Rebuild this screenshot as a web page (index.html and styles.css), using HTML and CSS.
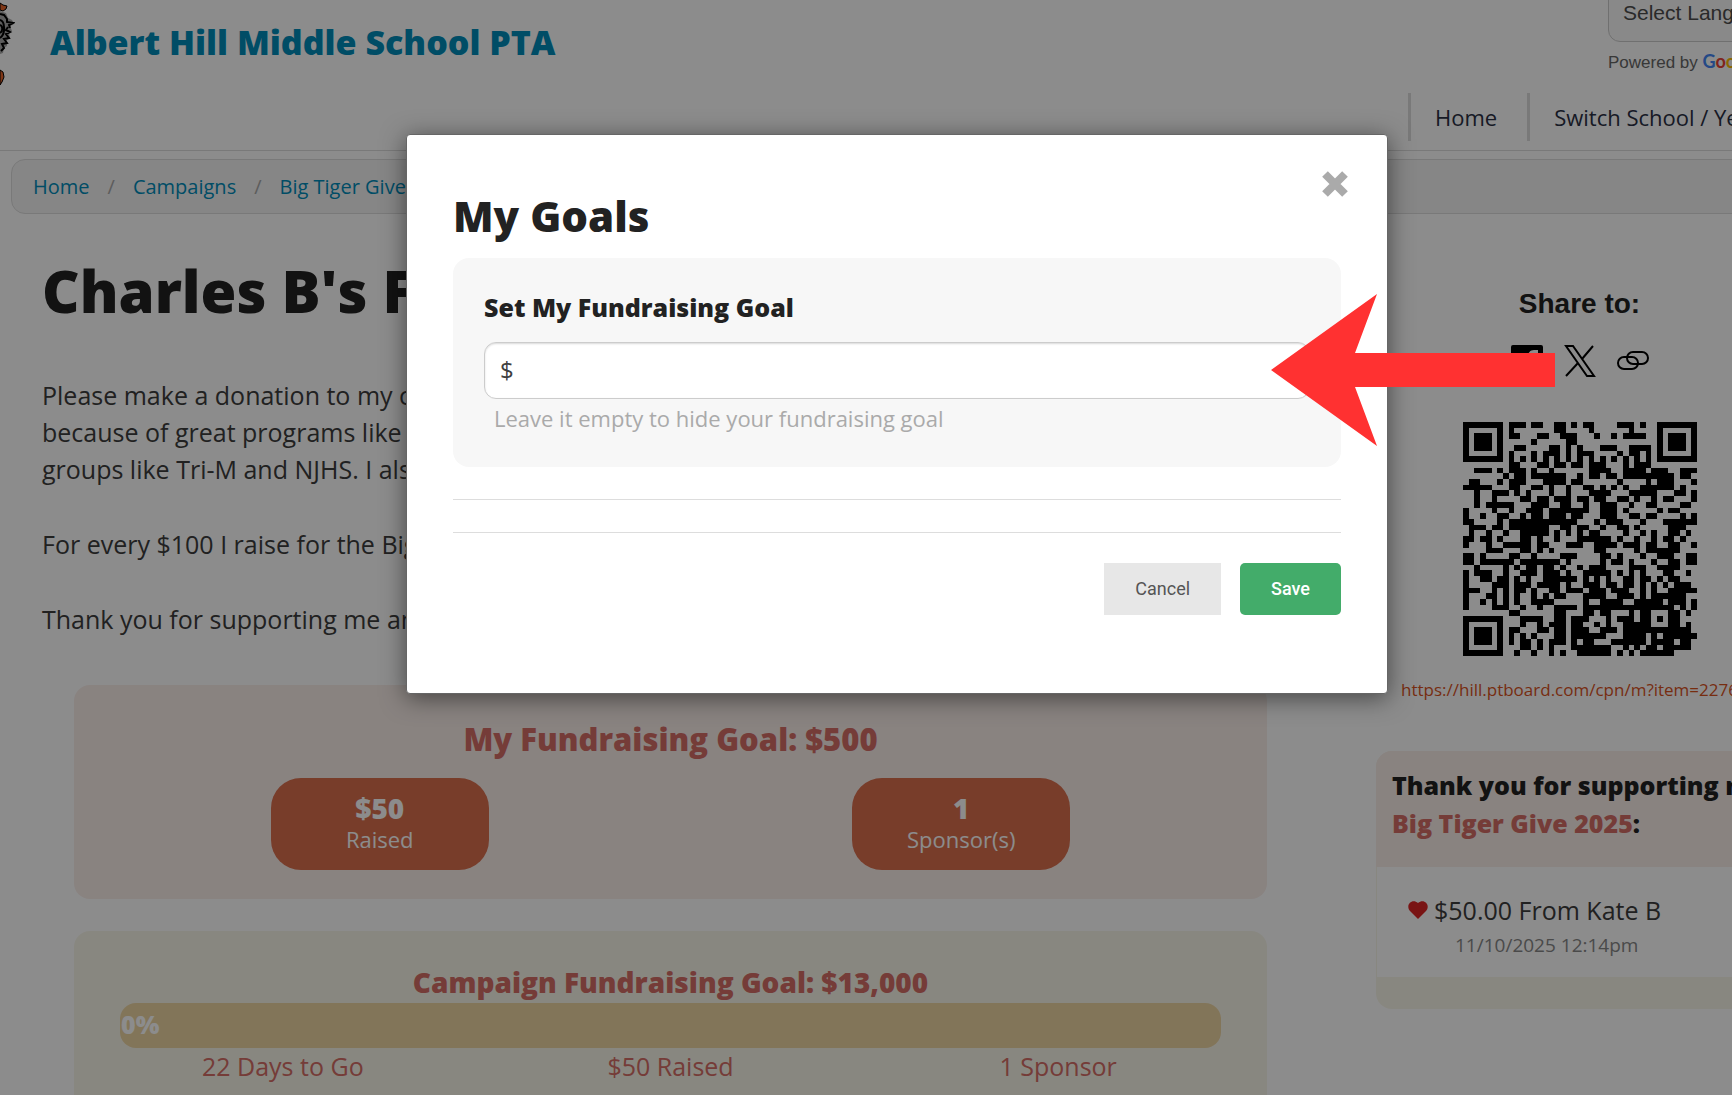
FILE: index.html
```
<!DOCTYPE html>
<html lang="en">
<head>
  <meta charset="UTF-8">
  <meta name="viewport" content="width=device-width, initial-scale=1.0">
  <title>Albert Hill Middle School PTA</title>
  <link rel="stylesheet" href="styles.css">
</head>
<body>
  <div class="page">
    <header class="header">
      <svg class="logo" viewBox="0 0 15 86" aria-hidden="true">
        <path d="M0 3 L3 5 7 6 6 9 3 11 0 10Z" fill="#e8652b" stroke="#000"/>
        <path d="M0 11 L6 13 8 18 12 20 14 24 10 26 12 31 9 33 10 38 7 40 7 46 4 48 3 53 0 54Z" fill="#aaa"/>
        <path d="M0 14l4 1 3 4 0 3 6 1-4 2 1 3M0 20c5 1 6 14 0 18M0 25c3 1 3 6 0 8M8 27l-2 3 4 2-4 2 3 4-5 1 3 4-5 1 2 4-3 3" fill="none" stroke="#000" stroke-width="2"/>
        <path d="M0 70 L3 72 4 77 2 82 0 85Z" fill="#e8652b" stroke="#000"/>
      </svg>
      <a class="brand" href="#">Albert Hill Middle School PTA</a>
      <div class="header-side">
        <div class="translate">
          <select class="language" aria-label="Select Language">
            <option>Select Language</option>
          </select>
          <div class="powered">Powered by
            <span class="google"><span class="g-blue">G</span><span class="g-red">o</span><span class="g-yellow">o</span><span class="g-blue">g</span><span class="g-green">l</span><span class="g-red">e</span></span>
          </div>
        </div>
        <nav class="nav">
          <a href="#">Home</a>
          <a href="#">Switch School / Year</a>
        </nav>
      </div>
    </header>

    <nav class="breadcrumbs" aria-label="Breadcrumbs">
      <a href="#">Home</a>
      <a href="#">Campaigns</a>
      <a href="#">Big Tiger Give</a>
    </nav>

    <div class="columns">
      <main class="main">
        <h1>Charles B's F</h1>
        <div class="story">
          <p>Please make a donation to my c<br>because of great programs like<br>groups like Tri-M and NJHS. I als</p>
          <p>For every $100 I raise for the Big</p>
          <p>Thank you for supporting me an</p>
        </div>

        <section class="card card-mine">
          <h2>My Fundraising Goal: $500</h2>
          <div class="pills">
            <div class="pill"><strong>$50</strong><span>Raised</span></div>
            <div class="pill"><strong>1</strong><span>Sponsor(s)</span></div>
          </div>
        </section>

        <section class="card card-campaign">
          <h2>Campaign Fundraising Goal: $13,000</h2>
          <div class="bar">0%</div>
          <div class="stats">
            <span>22 Days to Go</span>
            <span>$50 Raised</span>
            <span>1 Sponsor</span>
          </div>
        </section>
      </main>

      <aside class="side">
        <div class="share">
          <h3>Share to:</h3>
          <div class="share-icons">
            <a href="#" aria-label="Facebook">
              <svg width="32" height="32" viewBox="0 0 32 32"><path fill-rule="evenodd" d="M2 0h28a2 2 0 0 1 2 2v28a2 2 0 0 1-2 2h-8V20h4l1-5h-5v-3c0-2 1-3 3-3h2V5h-4c-4 0-6 3-6 6v4h-4v5h4v12H2a2 2 0 0 1-2-2V2a2 2 0 0 1 2-2z"/></svg>
            </a>
            <a href="#" aria-label="X">
              <svg width="32" height="32" viewBox="0 0 32 32" fill="none" stroke="#000" stroke-width="2"><path d="M2 1h7l21 30h-7zM29 1L18 14M14 18L2 31"/></svg>
            </a>
            <a href="#" aria-label="Copy link">
              <svg width="32" height="32" viewBox="0 0 32 32" fill="none" stroke="#000" stroke-width="2"><rect x="1" y="12" width="20" height="12" rx="6"/><rect x="10" y="7" width="21" height="12" rx="6"/></svg>
            </a>
          </div>
          <svg class="qr" viewBox="0 -0.5 41 41" shape-rendering="crispEdges" role="img" aria-label="QR code">
            <path d="M0 0h7m1 0h3m1 0h2m2 0h2m1 0h1m1 0h2m4 0h3m1 0h1m2 0h7
              M0 1h1m5 0h1m1 0h1m7 0h2m4 0h1m6 0h1m4 0h1m5 0h1
              M0 2h1m1 0h3m1 0h1m1 0h2m3 0h2m2 0h3m3 0h1m2 0h1m1 0h4m2 0h1m1 0h3m1 0h1
              M0 3h1m1 0h3m1 0h1m5 0h1m5 0h2m14 0h1m1 0h3m1 0h1
              M0 4h1m1 0h3m1 0h1m2 0h2m4 0h2m1 0h1m1 0h1m3 0h3m2 0h4m1 0h1m1 0h3m1 0h1
              M0 5h1m5 0h1m1 0h1m3 0h1m1 0h3m1 0h1m1 0h3m4 0h1m1 0h2m1 0h1m1 0h1m5 0h1
              M0 6h7m1 0h1m1 0h1m1 0h1m1 0h1m1 0h1m1 0h1m1 0h1m1 0h1m1 0h1m1 0h1m1 0h1m1 0h1m1 0h1m1 0h7
              M8 7h2m3 0h2m1 0h2m1 0h2m1 0h3m3 0h1m1 0h3
              M2 8h3m1 0h1m1 0h3m1 0h1m2 0h1m6 0h4m2 0h4m1 0h3m2 0h3
              M7 9h1m1 0h2m1 0h6m2 0h1m1 0h2m1 0h2m1 0h9m1 0h2
              M1 10h2m3 0h1m1 0h3m3 0h4m1 0h2m6 0h1m4 0h1m1 0h3m3 0h1
              M0 11h5m3 0h2m2 0h2m1 0h1m2 0h1m2 0h2m1 0h1m1 0h1m1 0h1m2 0h6m1 0h1m2 0h1
              M2 12h1m2 0h3m1 0h1m1 0h1m3 0h1m2 0h1m3 0h4m3 0h5m3 0h2m1 0h1
              M2 13h1m2 0h1m4 0h2m1 0h2m1 0h3m1 0h2m1 0h2m2 0h2m1 0h1m2 0h1m1 0h2m3 0h1
              M2 14h1m1 0h5m3 0h3m2 0h2m2 0h1m2 0h3m2 0h1m2 0h2m4 0h2
              M0 15h1m4 0h1m2 0h1m2 0h3m1 0h7m2 0h3m1 0h1m5 0h1m1 0h2
              M0 16h1m2 0h1m2 0h2m2 0h1m1 0h2m1 0h3m1 0h2m3 0h3m2 0h2m1 0h2m4 0h1m1 0h1
              M0 17h2m4 0h1m1 0h12m3 0h1m1 0h3m3 0h1m3 0h6
              M1 18h3m1 0h2m1 0h7m2 0h2m1 0h2m2 0h1m2 0h2m1 0h1m5 0h3
              M1 19h1m2 0h1m2 0h1m2 0h5m1 0h1m1 0h1m1 0h1m1 0h2m4 0h1m2 0h1m1 0h1m2 0h2m1 0h1
              M0 20h2m1 0h2m1 0h1m3 0h2m1 0h1m2 0h1m3 0h6m1 0h1m2 0h1m2 0h1m1 0h2m1 0h1
              M0 21h1m3 0h1m2 0h5m1 0h2m3 0h3m2 0h4m1 0h3m1 0h2m2 0h2m2 0h2
              M4 22h3m3 0h2m1 0h1m1 0h1m7 0h2m5 0h1m1 0h6
              M0 23h2m1 0h1m4 0h2m2 0h1m4 0h3m4 0h2m1 0h1m3 0h1m2 0h3m2 0h2
              M0 24h2m1 0h6m1 0h7m1 0h1m5 0h1m1 0h2m1 0h1m3 0h1m2 0h2m1 0h2
              M2 25h1m4 0h1m1 0h1m1 0h2m1 0h2m1 0h1m2 0h1m1 0h3m4 0h3m2 0h4
              M0 26h1m1 0h3m2 0h1m2 0h3m1 0h3m1 0h1m2 0h5m1 0h1m1 0h1m1 0h1m3 0h2m2 0h1
              M0 27h1m2 0h2m1 0h2m1 0h1m1 0h1m2 0h6m1 0h1m1 0h1m1 0h1m2 0h2m1 0h2m1 0h1m1 0h2
              M0 28h1m4 0h3m1 0h3m1 0h4m1 0h1m2 0h3m1 0h2m1 0h2m1 0h1m1 0h1m1 0h1m1 0h3
              M0 29h3m2 0h1m1 0h1m1 0h2m1 0h1m2 0h2m1 0h3m1 0h3m1 0h3m2 0h1m1 0h1m2 0h6
              M0 30h1m3 0h2m1 0h1m1 0h1m2 0h1m1 0h1m1 0h2m3 0h4m2 0h3m1 0h1m1 0h6
              M0 31h1m2 0h1m1 0h1m1 0h1m1 0h1m2 0h4m5 0h1m2 0h4m2 0h5m1 0h3m1 0h1
              M0 32h1m4 0h3m2 0h1m2 0h1m2 0h4m1 0h16m1 0h1m1 0h1
              M8 33h2m6 0h2m3 0h2m1 0h2m3 0h1m1 0h2m3 0h2m1 0h1m1 0h1
              M0 34h7m3 0h4m2 0h2m1 0h3m3 0h1m1 0h3m1 0h2m1 0h1m1 0h2
              M0 35h1m5 0h1m3 0h1m2 0h1m1 0h3m1 0h2m2 0h1m1 0h1m2 0h5m3 0h2m1 0h1
              M0 36h1m1 0h3m1 0h1m1 0h2m3 0h2m1 0h2m1 0h3m2 0h3m1 0h12
              M0 37h1m1 0h3m1 0h1m1 0h1m1 0h1m1 0h1m3 0h2m1 0h6m3 0h4m1 0h1m1 0h6
              M0 38h1m1 0h3m1 0h1m1 0h1m1 0h2m1 0h1m1 0h3m1 0h1m1 0h2m3 0h6m1 0h4m1 0h2
              M0 39h1m5 0h1m3 0h2m1 0h1m1 0h1m3 0h7m2 0h1m1 0h1m1 0h2m1 0h5
              M0 40h7m2 0h1m2 0h1m2 0h1m1 0h1m2 0h6m1 0h1m1 0h1m1 0h6" stroke="#000"/>
          </svg>
        </div>
        <a class="share-url" href="#">https://hill.ptboard.com/cpn/m?item=22760</a>

        <section class="thanks">
          <h4>Thank you for supporting my<br><a href="#">Big Tiger Give 2025</a>:</h4>
          <div class="donation">
            <svg width="20" height="18" viewBox="0 0 20 18" aria-hidden="true"><path fill="#dc2626" d="M10 18L2 10C-3 4 4-3 10 2c6-5 13 2 8 8z"/></svg>
            <div>
              <p class="donor">$50.00 From Kate B</p>
              <p class="date">11/10/2025 12:14pm</p>
            </div>
          </div>
        </section>
      </aside>
    </div>

    <div class="overlay">
      <div class="modal" role="dialog" aria-labelledby="modal-title">
        <button class="close" type="button" aria-label="Close">
          <svg width="28" height="28" viewBox="0 0 28 28"><path d="M4 4l20 20M24 4L4 24" stroke="#aaa" stroke-width="8"/></svg>
        </button>
        <h2 id="modal-title">My Goals</h2>
        <form>
          <div class="panel">
            <label for="goal">Set My Fundraising Goal</label>
            <input id="goal" type="text" value="$">
            <p class="hint">Leave it empty to hide your fundraising goal</p>
          </div>
          <hr>
          <hr>
          <div class="buttons">
            <button class="cancel" type="button">Cancel</button>
            <button class="save" type="submit">Save</button>
          </div>
        </form>
        <svg class="arrow" width="284" height="152" viewBox="0 0 284 152" aria-hidden="true"><path fill="#ff3131" d="M0 76L106 0 84 59H284V93H84L106 152z"/></svg>
      </div>
    </div>
  </div>
</body>
</html>
```
FILE: styles.css
```
* { box-sizing: border-box; }
body { margin: 0; overflow: hidden; font-family: "Open Sans", sans-serif; font-size: 25px; color: #222; background: #fff; }
h1, h2, h3, h4, p { margin: 0; }
h1, h2, h4 { font-weight: 800; }
a { color: #008cba; text-decoration: none; white-space: nowrap; }

/* page is a little wider than the window */
.page { position: relative; height: 100vh; margin-right: -62px; overflow: hidden; }

.header { display: flex; height: 151px; border-bottom: 1px solid #ddd; }
.logo { width: 15px; height: 86px; flex: none; }
.brand { flex: 1; padding: 20px 0 0 35px; font-size: 34px; font-weight: 800; line-height: 44px; }
.header-side { flex: 0 0 386px; min-width: 0; }
.translate { margin: -12px 0 0 200px; font-family: "Liberation Sans", sans-serif; }
.language { display: block; width: 220px; height: 54px; padding: 0 14px 5px; appearance: none; border: 1px solid #ccc; border-radius: 12px; background: #fafafa; font-family: inherit; font-size: 21px; color: #4d4d4d; }
.powered { height: 20px; margin-top: 9px; font-size: 17px; line-height: 20px; color: #666; white-space: nowrap; }
.google { font-family: Lato, sans-serif; font-size: 18px; font-weight: 700; }
.g-blue { color: #4285f4; }
.g-red { color: #ea4335; }
.g-yellow { color: #fbbc05; }
.g-green { color: #34a853; }
.nav { display: flex; margin-top: 22px; }
.nav a { padding: 0 30px 0 24px; border-left: 3px solid #ddd; font-size: 22px; line-height: 48px; color: #2b3044; }

.breadcrumbs { display: flex; height: 55px; margin: 8px 11px 0; padding: 0 21px; border: 1px solid #dcdcdc; border-radius: 14px; background: #f4f4f4; font-size: 20px; line-height: 53px; }
.breadcrumbs a + a::before { content: "/"; margin: 0 18px; color: #aaa; }

.columns { display: flex; }
.main { flex: 1; padding: 45px 109px 0 42px; }
.main h1 { font-size: 58px; line-height: 64px; white-space: nowrap; }
.story { margin-top: 54px; line-height: 37px; white-space: nowrap; color: #3c3c3c; }
.story p { margin-bottom: 38px; }

.card { margin: 0 0 32px 32px; padding: 31px 15px; border-radius: 16px; text-align: center; }
.card h2 { line-height: 40px; color: #d56d66; }
.card-mine { margin-top: 47px; padding: 34px 15px 29px; background: #faeeea; }
.card-mine h2 { font-size: 31px; }
.card-campaign { height: 240px; background: #f8f6ea; }
.card-campaign h2 { font-size: 28px; }
.pills { display: flex; justify-content: space-around; margin-top: 19px; }
.pill { display: flex; flex-direction: column; width: 218px; height: 92px; padding-top: 14px; border-radius: 30px; background: #da6f4e; color: #fff; }
.pill strong { font-size: 28px; font-weight: 800; line-height: 32px; }
.pill span { font-size: 22px; line-height: 30px; }
.bar { height: 45px; margin: 1px 31px 0; padding-left: 1px; border-radius: 16px; background: #edd5a3; font-weight: 800; line-height: 43px; color: #fff; text-align: left; }
.stats { display: flex; line-height: 36px; color: #d56d66; }
.stats span { flex: 1; }

.side { flex: 0 0 418px; }
.share { display: flex; flex-direction: column; align-items: center; padding: 70px 11px 0 0; }
.share h3 { font-family: "Liberation Sans", sans-serif; font-size: 28px; line-height: 40px; }
.share-icons { display: flex; gap: 21px; margin-top: 21px; line-height: 0; }
.qr { width: 234px; height: 234px; margin-top: 45px; }
.share-url { display: block; margin: 19px 0 0 25px; font-size: 17px; line-height: 30px; color: #d9531e; }
.thanks { margin-top: 46px; padding-bottom: 32px; border-radius: 16px; background: #f8f6ea; overflow: hidden; }
.thanks h4 { padding: 15px 16px 25px; background: #faeeea; font-size: 25px; line-height: 38px; white-space: nowrap; }
.thanks h4 a { color: #d56d66; }
.donation { display: flex; gap: 6px; height: 110px; margin-left: 1px; padding: 24px 31px 0; background: #fff; }
.donation svg { margin-top: 10px; }
.donor { line-height: 38px; color: #3c3c3c; }
.date { padding-left: 21px; font-size: 19px; line-height: 32px; color: #888; }

.overlay { position: absolute; inset: 0; display: flex; justify-content: center; align-items: flex-start; padding-top: 134px; background: rgba(0, 0, 0, .45); }
.modal { position: relative; width: 90%; max-width: 982px; padding: 54px 46px 78px; border: 1px solid #666; border-radius: 4px; background: #fff; box-shadow: 0 4px 24px rgba(0, 0, 0, .5); }
.modal h2 { font-size: 42px; line-height: 54px; }
.close { position: absolute; top: 35px; right: 38px; padding: 0; border: 0; background: none; line-height: 0; cursor: pointer; }
.panel { margin-top: 15px; padding: 31px; height: 209px; border-radius: 16px; background: #f7f7f7; }
.panel label { display: block; font-weight: 800; line-height: 36px; }
.panel input { display: block; width: 100%; height: 57px; margin-top: 17px; padding: 0 15px 2px; border: 1px solid #ccc; border-radius: 12px; background: #fff; box-shadow: inset 0 1px 2px rgba(0, 0, 0, .15); font: inherit; font-size: 24px; color: #404040; }
.hint { padding: 4px 10px; font-size: 22px; line-height: 30px; color: #aaa; }
.modal hr { margin: 32px 0 0; border: 0; border-top: 1px solid #ddd; }
.buttons { display: flex; justify-content: flex-end; gap: 19px; margin-top: 30px; }
.buttons button { height: 52px; padding: 0 31px 2px; border: 0; font-family: Roboto, sans-serif; font-size: 18px; cursor: pointer; }
.buttons .cancel { background: #e7e7e7; color: #555; font-weight: 400; }
.buttons .save { border-radius: 5px; background: #43ac6a; color: #fff; font-weight: 500; }
.arrow { position: absolute; top: 159px; left: 864px; }
```
